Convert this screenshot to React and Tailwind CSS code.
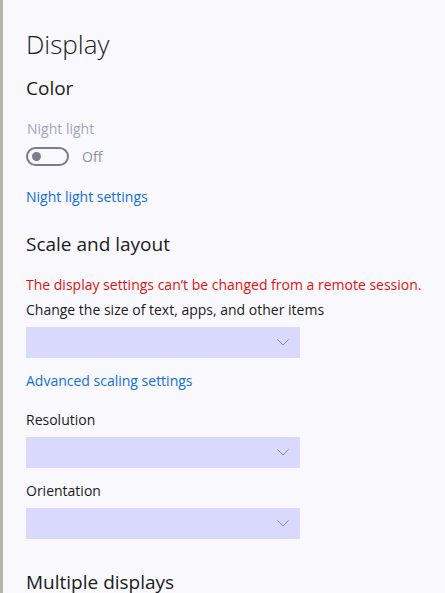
const font = { fontFamily: '"Open Sans", "Noto Sans", sans-serif' };

function Dropdown({ className = '' }) {
    return (
        <div className={`w-[274px] h-[31px] bg-[#d9d8fd] flex items-center justify-end pr-[11px] ${className}`}>
            <svg width="12" height="7" viewBox="0 0 12 7" fill="none">
                <path d="M0.5 0.5 L6 6 L11.5 0.5" stroke="#8a8a96" strokeWidth="1" />
            </svg>
        </div>
    );
}

export default function App() {
    return (
        <div
            className="w-[445px] h-[593px] overflow-hidden bg-[#f9f9fd] border-l-[3px] border-[#b3b3a6] text-[#1b1b1b]"
            style={font}
        >
            <div className="flex flex-col items-start pl-[23px]">
                {/* Header */}
                <h1 className="mt-[26px] h-[36px] leading-[36px] text-[26px] font-light">Display</h1>
                <h2 className="mt-[13px] h-[26px] leading-[26px] text-[19px]">Color</h2>

                {/* Night light */}
                <div className="mt-[18px] h-[20px] leading-[20px] text-[14px] text-[#a4a4bd] ml-[1px]">Night light</div>
                <div className="mt-[8px] flex items-center gap-[13px]">
                    <div className="w-[43px] h-[19px] rounded-full border-2 border-[#7c7b8c] flex items-center pl-[4px]">
                        <span className="w-[9px] h-[9px] rounded-full bg-[#7c7b8f]" />
                    </div>
                    <span className="text-[14px] text-[#8f8f9f] leading-[19px]">Off</span>
                </div>
                <a className="mt-[21px] h-[20px] leading-[20px] text-[14px] text-[#0f6fdc]">Night light settings</a>

                {/* Scale and layout */}
                <h2 className="mt-[24px] h-[26px] leading-[26px] text-[19px]">Scale and layout</h2>
                <div className="mt-[18px] h-[20px] leading-[20px] text-[14px] text-[#e2120f]">
                    The display settings can’t be changed from a remote session.
                </div>
                <div className="mt-[5px] h-[20px] leading-[20px] text-[14px]">
                    Change the size of text, apps, and other items
                </div>
                <Dropdown className="mt-[7px]" />
                <a className="mt-[13px] h-[20px] leading-[20px] text-[14px] text-[#0f6fdc]">Advanced scaling settings</a>

                <div className="mt-[19px] h-[20px] leading-[20px] text-[14px]">Resolution</div>
                <Dropdown className="mt-[7px]" />

                <div className="mt-[13px] h-[20px] leading-[20px] text-[14px]">Orientation</div>
                <Dropdown className="mt-[7px]" />

                <h2 className="mt-[30px] h-[26px] leading-[26px] text-[19px]">Multiple displays</h2>
            </div>
        </div>
    );
}
